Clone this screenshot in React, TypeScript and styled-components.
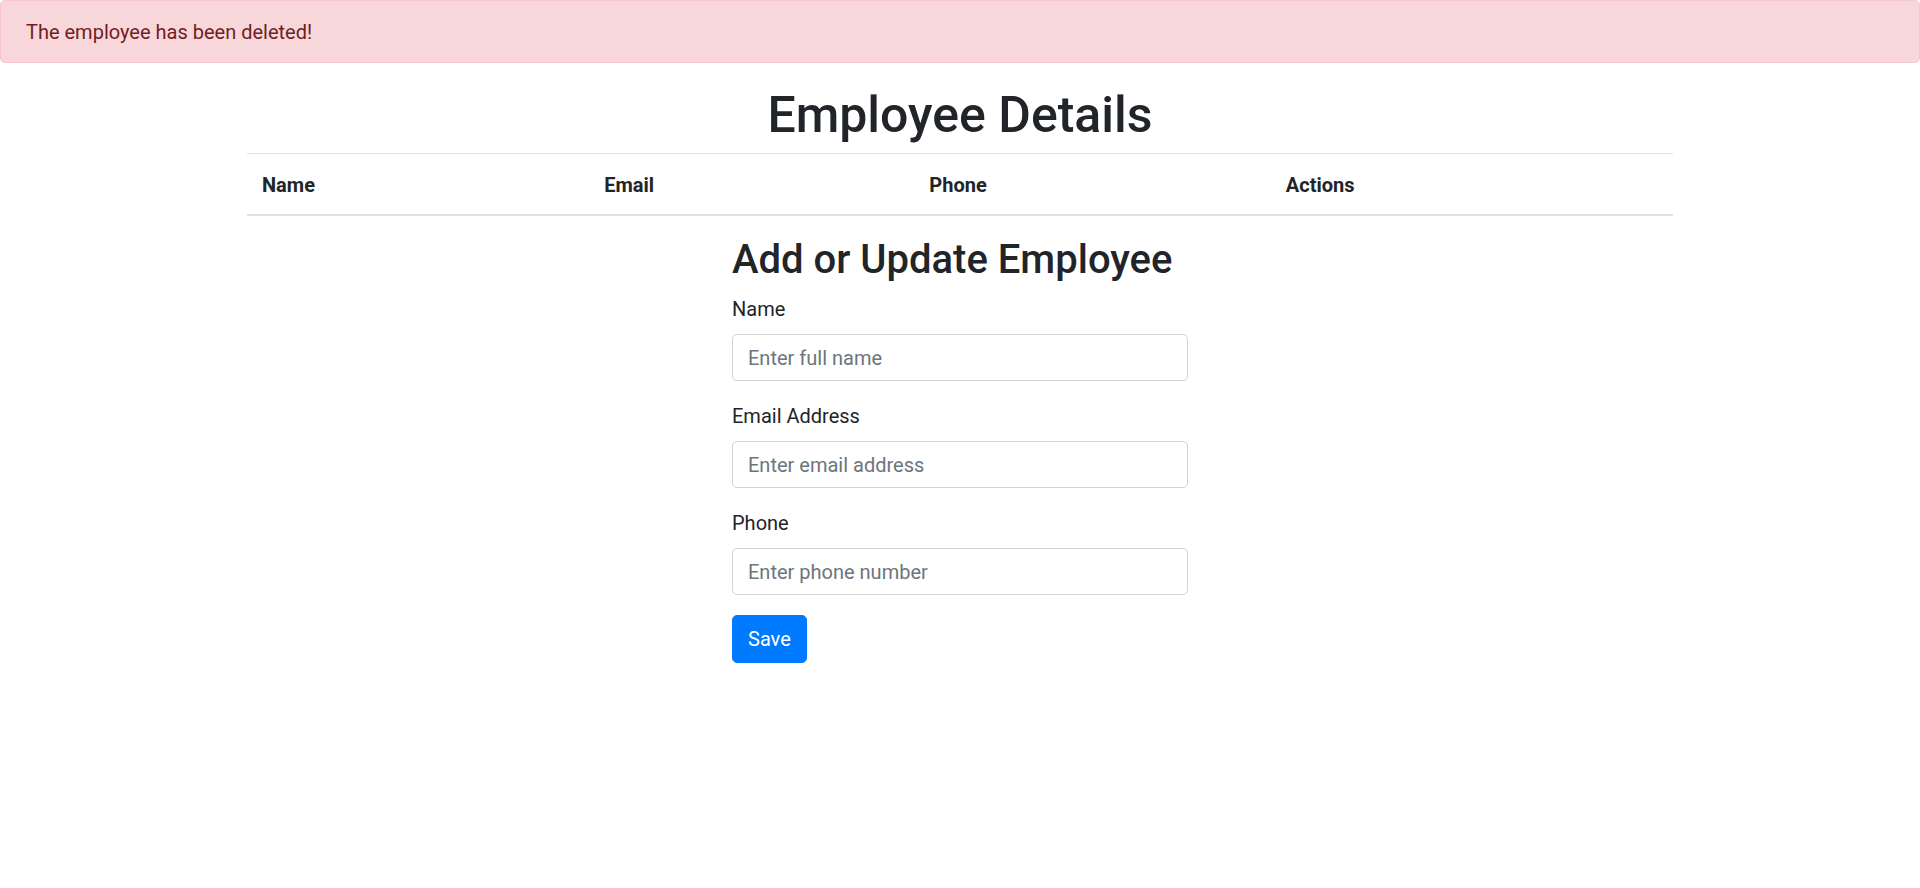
import React from "react";
import styled, { createGlobalStyle } from "styled-components";

const GlobalStyle = createGlobalStyle`
  html, body {
    margin: 0;
    padding: 0;
    background: #fff;
  }
  body {
    font-family: Roboto, "Liberation Sans", sans-serif;
    font-size: 20px;
    line-height: 1.5;
    color: #212529;
  }
  * { box-sizing: border-box; }
`;

const Alert = styled.div`
  width: 100%;
  padding: 16px 25px 15px;
  margin-bottom: 20px;
  border: 1px solid #f5c6cb;
  border-radius: 5px;
  background: #f8d7da;
  color: #721c24;
  font-size: 20px;
  line-height: 30px;
`;

const Container = styled.div`
  width: 1426px;
  margin: 0 auto;
`;

const Title = styled.h1`
  margin: 0 0 8px;
  padding-top: 2px;
  text-align: center;
  font-size: 50px;
  font-weight: 500;
  line-height: 60px;
  color: #212529;
`;

const Table = styled.table`
  width: 100%;
  border-collapse: collapse;
  margin-bottom: 20px;
`;

const HeadCell = styled.th<{ $w: string }>`
  width: ${(p) => p.$w};
  padding: 16px 15px 14px;
  text-align: left;
  font-weight: 700;
  font-size: 20px;
  line-height: 30px;
  border-top: 1px solid #dee2e6;
  border-bottom: 2px solid #dee2e6;
`;

const FormWrap = styled.form`
  width: 456px;
  margin: 0 auto;
`;

const FormTitle = styled.h2`
  margin: 0 0 10px;
  font-size: 40px;
  font-weight: 500;
  line-height: 48px;
  white-space: nowrap;
  color: #212529;
`;

const Group = styled.div`
  margin-bottom: 20px;
`;

const Label = styled.label`
  display: block;
  margin-bottom: 10px;
  font-size: 20px;
  line-height: 30px;
`;

const Input = styled.input`
  display: block;
  width: 100%;
  height: 47px;
  padding: 7px 15px;
  font-family: inherit;
  font-size: 20px;
  line-height: 30px;
  color: #495057;
  background: #fff;
  border: 1px solid #ced4da;
  border-radius: 5px;
  outline: none;
  &::placeholder {
    color: #6c757d;
    opacity: 1;
  }
`;

const Button = styled.button`
  display: inline-block;
  height: 48px;
  padding: 7px 15px;
  font-family: inherit;
  font-size: 20px;
  line-height: 30px;
  color: #fff;
  background: #007bff;
  border: 1px solid #007bff;
  border-radius: 5px;
  cursor: pointer;
`;

const columns = [
  { label: "Name", w: "24%" },
  { label: "Email", w: "22.8%" },
  { label: "Phone", w: "25%" },
  { label: "Actions", w: "28.2%" },
];

const fields = [
  { label: "Name", placeholder: "Enter full name", type: "text" },
  { label: "Email Address", placeholder: "Enter email address", type: "email" },
  { label: "Phone", placeholder: "Enter phone number", type: "text" },
];

export default function App() {
  return (
    <>
      <GlobalStyle />
      <Alert role="alert">The employee has been deleted!</Alert>
      <Container>
        <Title>Employee Details</Title>
        <Table>
          <thead>
            <tr>
              {columns.map((c) => (
                <HeadCell key={c.label} $w={c.w}>
                  {c.label}
                </HeadCell>
              ))}
            </tr>
          </thead>
          <tbody></tbody>
        </Table>
        <FormWrap onSubmit={(e) => e.preventDefault()}>
          <FormTitle>Add or Update Employee</FormTitle>
          {fields.map((f) => (
            <Group key={f.label}>
              <Label>{f.label}</Label>
              <Input type={f.type} placeholder={f.placeholder} />
            </Group>
          ))}
          <Button type="submit">Save</Button>
        </FormWrap>
      </Container>
    </>
  );
}
